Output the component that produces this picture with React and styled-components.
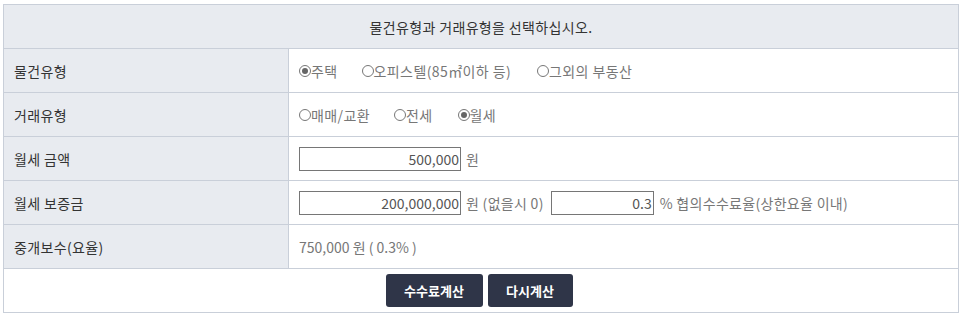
import React, { useState } from "react";
import styled, { createGlobalStyle } from "styled-components";

const GlobalStyle = createGlobalStyle`
  body {
    margin: 0;
    padding: 4px 6px 0 3px;
    background: #fff;
    font-family: "Noto Sans CJK KR", "Noto Sans", sans-serif;
    font-size: 14px;
    color: #333;
  }
`;

const Table = styled.div`
  width: 956px;
  border: 1px solid #c9cfd9;
  box-sizing: border-box;
`;

const Header = styled.div`
  height: 44px;
  display: flex;
  align-items: center;
  justify-content: center;
  background: #e8ebf0;
  border-bottom: 1px solid #c9cfd9;
  box-sizing: border-box;
  color: #333;
  letter-spacing: 0.35px;
`;

const Row = styled.div`
  display: grid;
  grid-template-columns: 285px 1fr;
  height: 44px;
  border-bottom: 1px solid #c9cfd9;
  box-sizing: border-box;
`;

const Label = styled.div`
  display: flex;
  align-items: center;
  padding-left: 10px;
  background: #e8ebf0;
  border-right: 1px solid #c9cfd9;
  color: #333;
  letter-spacing: 0.35px;
`;

const Value = styled.div`
  display: flex;
  align-items: center;
  padding-left: 10px;
  color: #777;
`;

const RadioItem = styled.label`
  display: flex;
  align-items: center;
  margin-right: ${(p) => p.$mr}px;
  cursor: pointer;
  color: #777;
  letter-spacing: 0.4px;
`;

const Circle = styled.span`
  width: 12px;
  height: 12px;
  border: 1px solid #777;
  border-radius: 50%;
  box-sizing: border-box;
  display: inline-flex;
  align-items: center;
  justify-content: center;
  margin-top: 1px;
  &::after {
    content: "";
    width: 6px;
    height: 6px;
    border-radius: 50%;
    background: ${(p) => (p.$on ? "#666" : "transparent")};
  }
`;

const Input = styled.input`
  width: ${(p) => p.$w}px;
  height: 24px;
  box-sizing: border-box;
  border: 1px solid #767676;
  text-align: right;
  font-family: inherit;
  font-size: 14px;
  color: #555;
  padding: 0 1px;
  outline: none;
`;

const Unit = styled.span`
  margin-left: ${(p) => p.$ml || 5}px;
  margin-right: ${(p) => p.$mr || 0}px;
  color: #777;
  letter-spacing: 0.3px;
`;

const Footer = styled.div`
  height: 43px;
  display: flex;
  align-items: center;
  justify-content: center;
  gap: 5px;
  padding-right: 4px;
`;

const Button = styled.button`
  width: ${(p) => p.$w}px;
  height: 33px;
  border: none;
  border-radius: 3px;
  background: #2f3548;
  color: #fff;
  font-family: inherit;
  font-size: 13px;
  font-weight: bold;
  cursor: pointer;
`;

function Radio({ items, value, onChange }) {
  return items.map((it) => (
    <RadioItem key={it.label} $mr={it.mr} onClick={() => onChange(it.label)}>
      <Circle $on={value === it.label} />
      {it.label}
    </RadioItem>
  ));
}

export default function App() {
  const [kind, setKind] = useState("주택");
  const [deal, setDeal] = useState("월세");

  return (
    <>
      <GlobalStyle />
      <Table>
        <Header>물건유형과 거래유형을 선택하십시오.</Header>
        <Row>
          <Label>물건유형</Label>
          <Value>
            <Radio
              value={kind}
              onChange={setKind}
              items={[
                { label: "주택", mr: 24 },
                { label: "오피스텔(85㎡이하 등)", mr: 26 },
                { label: "그외의 부동산", mr: 0 },
              ]}
            />
          </Value>
        </Row>
        <Row>
          <Label>거래유형</Label>
          <Value>
            <Radio
              value={deal}
              onChange={setDeal}
              items={[
                { label: "매매/교환", mr: 24 },
                { label: "전세", mr: 25 },
                { label: "월세", mr: 0 },
              ]}
            />
          </Value>
        </Row>
        <Row>
          <Label>월세 금액</Label>
          <Value>
            <Input $w={162} defaultValue="500,000" />
            <Unit>원</Unit>
          </Value>
        </Row>
        <Row>
          <Label>월세 보증금</Label>
          <Value>
            <Input $w={162} defaultValue="200,000,000" />
            <Unit $mr={7}>원 (없을시 0)</Unit>
            <Input $w={103} defaultValue="0.3" />
            <Unit $ml={6}>% 협의수수료율(상한요율 이내)</Unit>
          </Value>
        </Row>
        <Row>
          <Label>중개보수(요율)</Label>
          <Value>750,000 원 ( 0.3% )</Value>
        </Row>
        <Footer>
          <Button $w={97}>수수료계산</Button>
          <Button $w={85}>다시계산</Button>
        </Footer>
      </Table>
    </>
  );
}
